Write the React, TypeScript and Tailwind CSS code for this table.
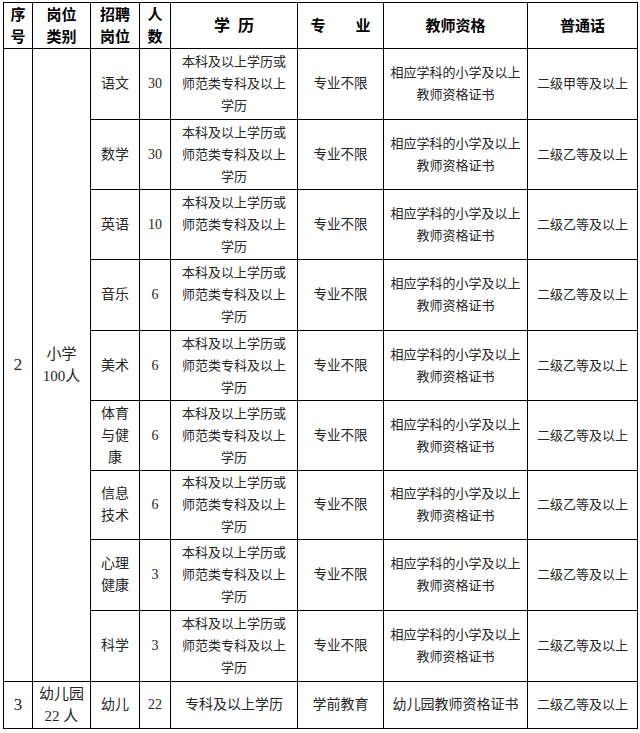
const EDU = (
  <>
    本科及以上学历或
    <br />
    师范类专科及以上
    <br />
    学历
  </>
);

const CERT = (
  <>
    相应学科的小学及以上
    <br />
    教师资格证书
  </>
);

const rows = [
  { subject: <>语文</>, count: "30", level: "二级甲等及以上", h: "h-[71px]" },
  { subject: <>数学</>, count: "30", level: "二级乙等及以上", h: "h-[70px]" },
  { subject: <>英语</>, count: "10", level: "二级乙等及以上", h: "h-[70px]" },
  { subject: <>音乐</>, count: "6", level: "二级乙等及以上", h: "h-[71px]" },
  { subject: <>美术</>, count: "6", level: "二级乙等及以上", h: "h-[70px]" },
  { subject: <>体育<br />与健<br />康</>, count: "6", level: "二级乙等及以上", h: "h-[70px]" },
  { subject: <>信息<br />技术</>, count: "6", level: "二级乙等及以上", h: "h-[69px]" },
  { subject: <>心理<br />健康</>, count: "3", level: "二级乙等及以上", h: "h-[71px]" },
  { subject: <>科学</>, count: "3", level: "二级乙等及以上", h: "h-[71px]" },
];

const cell = "border border-black text-center align-middle p-0";
const head = "border border-black text-center align-middle p-0 font-bold text-[15px] leading-[22px] text-black";

export default function App() {
  return (
    <div className="bg-white w-[640px] h-[733px] pt-[2px] pl-[3px] font-['Liberation_Serif','Noto_Sans_CJK_SC',serif] text-[13px] leading-[22px] text-[#262626]">
      <table className="table-fixed border-collapse w-[634px]">
        <colgroup>
          <col className="w-[29px]" />
          <col className="w-[58px]" />
          <col className="w-[49px]" />
          <col className="w-[31px]" />
          <col className="w-[127px]" />
          <col className="w-[86px]" />
          <col className="w-[144px]" />
          <col className="w-[110px]" />
        </colgroup>
        <thead>
          <tr className="h-[46px]">
            <th className={head}>序<br />号</th>
            <th className={head}>岗位<br />类别</th>
            <th className={head}>招聘<br />岗位</th>
            <th className={head}>人<br />数</th>
            <th className={`${head} text-[16px]`}>学<span className="ml-2">历</span></th>
            <th className={head}>专<span className="ml-[30px]">业</span></th>
            <th className={head}>教师资格</th>
            <th className={head}>普通话</th>
          </tr>
        </thead>
        <tbody>
          {rows.map((r, i) => (
            <tr key={i} className={r.h}>
              {i === 0 && (
                <>
                  <td rowSpan={9} className={`${cell} text-[17px]`}>2</td>
                  <td rowSpan={9} className={`${cell} text-[15px]`}>
                    小学
                    <br />
                    100人
                  </td>
                </>
              )}
              <td className={`${cell} text-[14px]`}>{r.subject}</td>
              <td className={`${cell} text-[14px]`}>{r.count}</td>
              <td className={cell}>{EDU}</td>
              <td className={`${cell} text-[13.5px]`}>专业不限</td>
              <td className={cell}>{CERT}</td>
              <td className={cell}>{r.level}</td>
            </tr>
          ))}
          <tr className="h-[47px]">
            <td className={`${cell} text-[17px]`}>3</td>
            <td className={`${cell} text-[15px]`}>
              幼儿园
              <br />
              22 人
            </td>
            <td className={`${cell} text-[14px]`}>幼儿</td>
            <td className={`${cell} text-[14px]`}>22</td>
            <td className={`${cell} text-[14px]`}>专科及以上学历</td>
            <td className={`${cell} text-[14px]`}>学前教育</td>
            <td className={`${cell} text-[14px]`}>幼儿园教师资格证书</td>
            <td className={cell}>二级乙等及以上</td>
          </tr>
        </tbody>
      </table>
    </div>
  );
}
